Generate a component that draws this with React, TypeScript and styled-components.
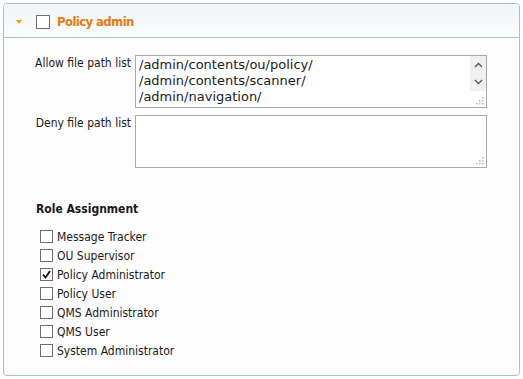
import { createGlobalStyle } from "styled-components";
import styled from "styled-components";

const GlobalStyle = createGlobalStyle`
  html, body { margin: 0; padding: 0; background: #ffffff; }
  body { font-family: "DejaVu Sans Condensed", "DejaVu Sans", sans-serif; font-stretch: condensed; font-size: 12px; color: #1a1a1a; }
`;

const Page = styled.div`
  padding: 3px 0 0 3px;
`;

const Panel = styled.section`
  width: 517px;
  height: 373px;
  box-sizing: border-box;
  border: 1px solid #9fc1de;
  border-radius: 4px;
  background: #fdfdfd;
  display: flex;
  flex-direction: column;
  overflow: hidden;
`;

const NextEdge = styled.div`
  margin: 3px 0 0 3px;
  width: 512px;
  border-top: 1px solid #b3cfe6;
`;

const Header = styled.div`
  height: 34px;
  flex-shrink: 0;
  box-sizing: border-box;
  border-bottom: 1px solid #9fc1de;
  background: linear-gradient(#f1f5f8, #fafcfd);
  display: flex;
  align-items: center;
  padding: 2px 0 0 12px;
`;

const Arrow = styled.span`
  width: 0;
  height: 0;
  border-left: 3.5px solid transparent;
  border-right: 3.5px solid transparent;
  border-top: 4px solid #f2a400;
  margin-right: 14px;
`;

const Box = styled.span<{ $size: number }>`
  width: ${(p) => p.$size}px;
  height: ${(p) => p.$size}px;
  box-sizing: border-box;
  border: 1px solid #6f6f6f;
  background: #fff;
  display: inline-flex;
  align-items: center;
  justify-content: center;
  flex-shrink: 0;
`;

const Title = styled.span`
  color: #e8790c;
  font-weight: bold;
  font-size: 13px;
  letter-spacing: -0.6px;
  margin-left: 7px;
`;

const Body = styled.div`
  padding: 17px 0 0 0;
  display: flex;
  flex-direction: column;
`;

const FieldRow = styled.div`
  display: grid;
  grid-template-columns: 127px 352px;
  column-gap: 4px;
  margin-bottom: 7px;
`;

const Label = styled.label`
  text-align: right;
  padding-top: 1px;
`;

const AreaWrap = styled.div`
  position: relative;
  height: 53px;
  box-sizing: border-box;
  border: 1px solid #a9a9a9;
  background: #fff;
`;

const Area = styled.textarea`
  width: 100%;
  height: 100%;
  box-sizing: border-box;
  border: none;
  outline: none;
  resize: none;
  overflow: hidden;
  padding: 1px 3px;
  font-family: "DejaVu Sans", sans-serif;
  font-size: 13px;
  line-height: 16px;
  color: #1a1a1a;
  background: transparent;
`;

const ScrollBar = styled.div`
  position: absolute;
  top: 0;
  right: 0;
  width: 16px;
  height: 35px;
  background: #f0f0f0;
  display: flex;
  flex-direction: column;
  align-items: center;
  justify-content: space-around;
`;

const Grip = styled.svg`
  position: absolute;
  right: 2px;
  bottom: 2px;
`;

const Heading = styled.h3`
  margin: 27px 0 11px 32px;
  font-size: 12px;
  font-weight: bold;
`;

const RoleList = styled.ul`
  list-style: none;
  margin: 0;
  padding: 0 0 0 36px;
  display: flex;
  flex-direction: column;
`;

const Role = styled.li`
  display: flex;
  align-items: center;
  height: 19px;
  gap: 4px;
`;

const ResizeGrip = () => (
  <Grip width="8" height="8" viewBox="0 0 8 8">
    {[
      [6, 0],
      [6, 3],
      [3, 3],
      [6, 6],
      [3, 6],
      [0, 6],
    ].map(([x, y]) => (
      <rect key={`${x}-${y}`} x={x} y={y} width="1.5" height="1.5" fill="#b5b5b5" />
    ))}
  </Grip>
);

const Chevron = ({ up }: { up?: boolean }) => (
  <svg width="9" height="6" viewBox="0 0 9 6">
    <path d={up ? "M1 5 L4.5 1.5 L8 5" : "M1 1 L4.5 4.5 L8 1"} fill="none" stroke="#555" strokeWidth="1.3" />
  </svg>
);

const roles = [
  { name: "Message Tracker", checked: false },
  { name: "OU Supervisor", checked: false },
  { name: "Policy Administrator", checked: true },
  { name: "Policy User", checked: false },
  { name: "QMS Administrator", checked: false },
  { name: "QMS User", checked: false },
  { name: "System Administrator", checked: false },
];

export default function App() {
  return (
    <Page>
      <GlobalStyle />
      <Panel>
        <Header>
          <Arrow />
          <Box $size={14} />
          <Title>Policy admin</Title>
        </Header>
        <Body>
          <FieldRow>
            <Label>Allow file path list</Label>
            <AreaWrap>
              <Area
                readOnly
                defaultValue={"/admin/contents/ou/policy/\n/admin/contents/scanner/\n/admin/navigation/"}
              />
              <ScrollBar>
                <Chevron up />
                <Chevron />
              </ScrollBar>
              <ResizeGrip />
            </AreaWrap>
          </FieldRow>
          <FieldRow>
            <Label>Deny file path list</Label>
            <AreaWrap>
              <Area readOnly defaultValue="" />
              <ResizeGrip />
            </AreaWrap>
          </FieldRow>
          <Heading>Role Assignment</Heading>
          <RoleList>
            {roles.map((r) => (
              <Role key={r.name}>
                <Box $size={13}>
                  {r.checked && (
                    <svg width="9" height="9" viewBox="0 0 9 9">
                      <path d="M1 4.5 L3.5 7.5 L8 1" fill="none" stroke="#111" strokeWidth="1.8" />
                    </svg>
                  )}
                </Box>
                {r.name}
              </Role>
            ))}
          </RoleList>
        </Body>
      </Panel>
      <NextEdge />
    </Page>
  );
}
